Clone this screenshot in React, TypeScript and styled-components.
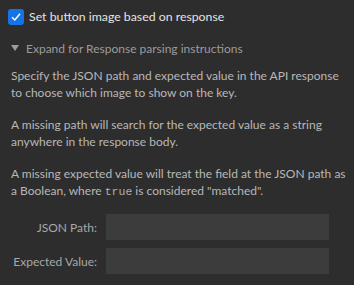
import React from 'react';
import styled, { createGlobalStyle } from 'styled-components';

const GlobalStyle = createGlobalStyle`
  html, body {
    margin: 0;
    padding: 0;
    background: #2d2d2d;
  }
  body {
    font-family: Lato, "Open Sans", sans-serif;
    font-size: 12px;
    color: #b8b8b8;
  }
`;

const Panel = styled.div`
  width: 354px;
  height: 285px;
  box-sizing: border-box;
  padding: 8px 0 0 8px;
  display: flex;
  flex-direction: column;
  overflow: hidden;
`;

const CheckRow = styled.label`
  display: flex;
  align-items: center;
  gap: 5px;
  height: 17px;
  color: #e4e4e4;
  font-size: 12.3px;
`;

const CheckBox = styled.span`
  width: 16px;
  height: 16px;
  border-radius: 3px;
  background: #1473e6;
  display: flex;
  align-items: center;
  justify-content: center;
`;

const Summary = styled.div`
  display: flex;
  align-items: center;
  gap: 7px;
  margin-top: 14px;
  padding-left: 3px;
  height: 18px;
  color: #9c9c9c;
`;

const Triangle = styled.span`
  width: 0;
  height: 0;
  border-left: 4px solid transparent;
  border-right: 4px solid transparent;
  border-top: 6px solid #9c9c9c;
`;

const Body = styled.div`
  padding-left: 3px;
  padding-right: 8px;
  margin-top: 10px;
`;

const Para = styled.p`
  margin: 0 0 15px;
  line-height: 17px;
`;

const Code = styled.code`
  font-family: "Liberation Mono", "DejaVu Sans Mono", monospace;
  font-size: 11.5px;
  line-height: 1;
  color: #b0b0b0;
`;

const Form = styled.div`
  display: grid;
  grid-template-columns: 89px 223px;
  column-gap: 9px;
  row-gap: 8px;
  align-items: center;
`;

const FieldLabel = styled.span`
  text-align: right;
  color: #a8a8a8;
`;

const Input = styled.input`
  height: 26px;
  box-sizing: border-box;
  border: none;
  background: #3c3c3c;
  outline: none;
  color: #e0e0e0;
  font: inherit;
  padding: 0 6px;
`;

export default function App() {
  return (
    <>
      <GlobalStyle />
      <Panel>
        <CheckRow>
          <CheckBox>
            <svg width="12" height="12" viewBox="0 0 12 12">
              <path d="M2 6.2 L4.8 9 L10 2.8" fill="none" stroke="#fff" strokeWidth="1.5" />
            </svg>
          </CheckBox>
          Set button image based on response
        </CheckRow>
        <Summary>
          <Triangle />
          Expand for Response parsing instructions
        </Summary>
        <Body>
          <Para>
            Specify the JSON path and expected value in the API response to choose which image to
            show on the key.
          </Para>
          <Para>
            A missing path will search for the expected value as a string anywhere in the response
            body.
          </Para>
          <Para>
            A missing expected value will treat the field at the JSON path as a Boolean, where{' '}
            <Code>true</Code> is considered "matched".
          </Para>
        </Body>
        <Form>
          <FieldLabel>JSON Path:</FieldLabel>
          <Input />
          <FieldLabel>Expected Value:</FieldLabel>
          <Input />
        </Form>
      </Panel>
    </>
  );
}
